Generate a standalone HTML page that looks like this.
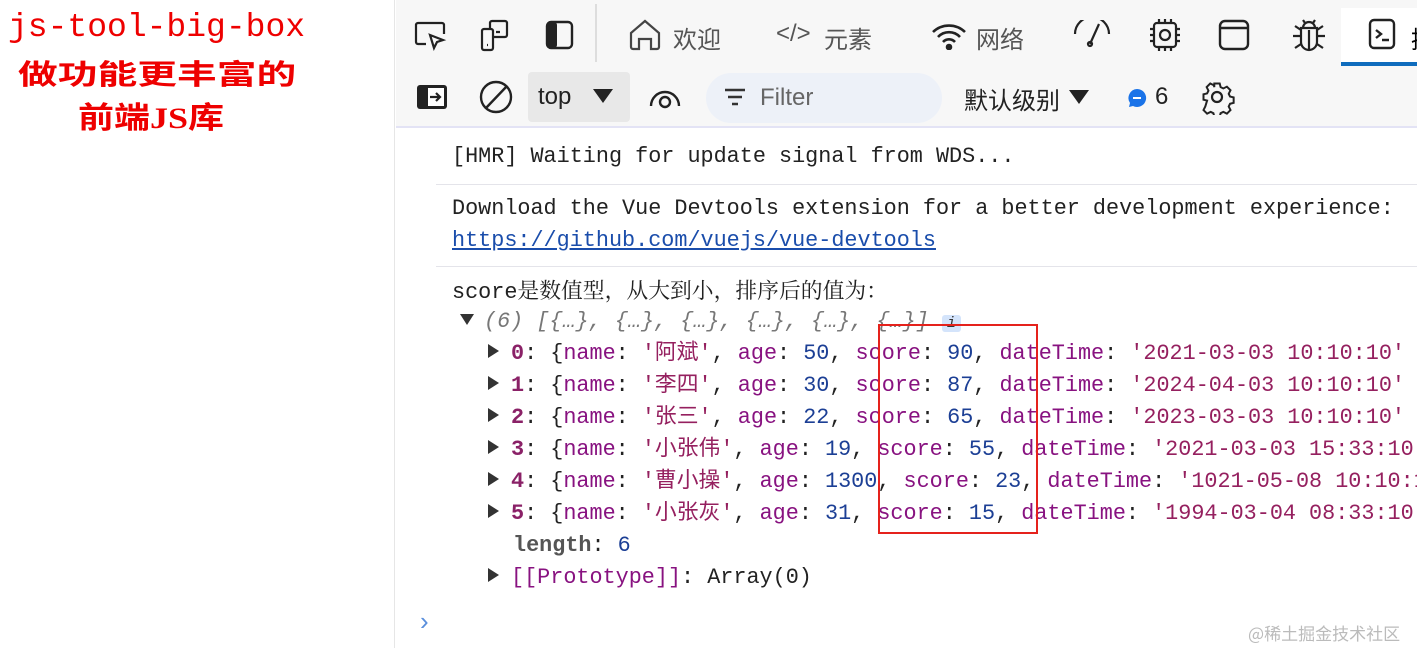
<!DOCTYPE html>
<html><head><meta charset="utf-8"><style>
*{margin:0;padding:0;box-sizing:border-box}
body{width:1417px;height:648px;overflow:hidden;background:#fff;position:relative;font-family:"Liberation Sans","Noto Sans CJK SC",sans-serif}
.left{position:absolute;left:0;top:0;width:395px;height:648px;background:#fff;border-right:1px solid #e6e6e6}
.t1{position:absolute;left:8px;top:8px;font-family:"Liberation Mono",monospace;color:#e00;font-size:33px;line-height:40px}
.t2{position:absolute;left:18px;top:56px;color:#e00;font-size:28px;line-height:34px;font-weight:bold;font-family:"Noto Sans CJK SC",sans-serif;transform:scaleX(1.42);transform-origin:0 0;white-space:nowrap}
.t3{position:absolute;left:78px;top:101px;color:#e00;font-size:30px;line-height:36px;font-weight:bold;font-family:"Liberation Serif","Noto Sans CJK SC",serif;transform:scaleX(1.2);transform-origin:0 0;white-space:nowrap}
.bar1{position:absolute;left:396px;top:0;width:1021px;height:66px;background:#f7f7f7}
.bar2{position:absolute;left:396px;top:66px;width:1021px;height:62px;background:#f7f7f7;border-bottom:2px solid #e3e3f5}
.ic{position:absolute}
.tab{position:absolute;top:20px;font-size:24px;color:#555;font-family:"Noto Sans CJK SC",sans-serif}
.sel{position:absolute;left:1341px;top:8px;width:76px;height:58px;background:#fff;border-bottom:4px solid #0f6cbd}
.con{position:absolute;left:396px;top:130px;width:1021px;height:518px;font-family:"Liberation Mono","Noto Sans CJK SC",monospace;font-size:21.8px;color:#222}
.l{position:absolute;left:56px;white-space:pre;height:32px;line-height:32px}
.sep{position:absolute;left:40px;right:0;height:1px;background:#e4e4ea}
.p{color:#881280}.k{color:#8a2167;font-weight:bold}.n{color:#1c3f95}.s{color:#95205f}.g{color:#777;font-style:italic}
.tri{display:inline-block;width:0;height:0;border-top:7px solid transparent;border-bottom:7px solid transparent;border-left:11px solid #333;margin-right:12px;vertical-align:middle;position:relative;top:-2px}
</style></head><body>
<div class="left">
<div class="t1">js-tool-big-box</div>
<div class="t2">做功能更丰富的</div>
<div class="t3">前端JS库</div>
</div>
<div class="bar1">
<svg class="ic" style="left:18px;top:20px" width="34" height="32" viewBox="0 0 34 32" fill="none" stroke="#222" stroke-width="2.2"><path d="M12 24H4a2 2 0 0 1-2-2V5a2 2 0 0 1 2-2h24a2 2 0 0 1 2 2v9"/><path d="M16 15l13 5-6 2-3 6z"/></svg>
<svg class="ic" style="left:84px;top:18px" width="30" height="34" viewBox="0 0 30 34" fill="none" stroke="#222" stroke-width="2.2"><rect x="10" y="3" width="17" height="16" rx="2"/><rect x="2" y="11" width="11" height="21" rx="2" fill="#f7f7f7"/><path d="M7 27h1M16 14h4"/></svg>
<svg class="ic" style="left:149px;top:20px" width="30" height="30" viewBox="0 0 30 30"><rect x="2" y="2" width="25" height="26" rx="4" fill="none" stroke="#222" stroke-width="2.4"/><rect x="2" y="2" width="10" height="26" rx="3" fill="#222"/></svg>
<div style="position:absolute;left:199px;top:4px;width:2px;height:58px;background:#ddd"></div>
<svg class="ic" style="left:232px;top:18px" width="34" height="34" viewBox="0 0 34 34" fill="none" stroke="#444" stroke-width="2.2"><path d="M3 15L17 3l14 12v14a2 2 0 0 1-2 2h-6V21h-12v10H5a2 2 0 0 1-2-2z"/></svg>
<div class="tab" style="left:277px">欢迎</div>
<div class="tab" style="left:380px;font-family:'Liberation Sans',sans-serif;top:20px">&lt;/&gt;</div>
<div class="tab" style="left:428px">元素</div>
<svg class="ic" style="left:535px;top:22px" width="36" height="28" viewBox="0 0 36 28" fill="none" stroke="#222" stroke-width="2.6"><path d="M2 10a23 23 0 0 1 32 0M7 15a15 15 0 0 1 22 0M12 20a8 8 0 0 1 12 0"/><circle cx="18" cy="25" r="2" fill="#222"/></svg>
<div class="tab" style="left:580px">网络</div>
<svg class="ic" style="left:676px;top:20px" width="40" height="30" viewBox="0 0 40 30" fill="none" stroke="#222" stroke-width="2.2"><path d="M3 14a17 17 0 0 1 34 0M18 24l9-20"/><circle cx="18" cy="24" r="2"/></svg>
<svg class="ic" style="left:752px;top:17px" width="34" height="36" viewBox="0 0 34 36" fill="none" stroke="#222" stroke-width="2.2"><rect x="6" y="6" width="22" height="24" rx="3"/><circle cx="17" cy="18" r="5"/><path d="M11 2v4M17 2v4M23 2v4M11 30v4M17 30v4M23 30v4M2 12h4M2 18h4M2 24h4M28 12h4M28 18h4M28 24h4"/></svg>
<svg class="ic" style="left:821px;top:18px" width="34" height="34" viewBox="0 0 34 34" fill="none" stroke="#222" stroke-width="2.4"><rect x="3" y="3" width="28" height="28" rx="5"/><path d="M3 10h28"/></svg>
<svg class="ic" style="left:895px;top:16px" width="36" height="38" viewBox="0 0 36 38" fill="none" stroke="#222" stroke-width="2.2"><path d="M10 12h16v14a8 8 0 0 1-16 0zM12 12a6 6 0 0 1 12 0M18 14v20M2 20h8M26 20h8M4 10l6 4M32 10l-6 4M4 32l6-4M32 32l-6-4M12 4l2 3M24 4l-2 3"/></svg>
</div>
<div class="sel"><svg class="ic" style="left:27px;top:10px" width="30" height="32" viewBox="0 0 30 32" fill="none" stroke="#222" stroke-width="2.4"><rect x="2" y="2" width="24" height="28" rx="4"/><path d="M8 12l5 4-5 4M14 22h7"/></svg><div style="position:absolute;left:70px;top:12px;font-size:24px;font-family:'Noto Sans CJK SC'">控</div></div>
<div class="bar2">
<svg class="ic" style="left:20px;top:18px" width="32" height="26" viewBox="0 0 32 26"><rect x="1" y="1" width="30" height="24" rx="3" fill="#222"/><rect x="12" y="4" width="16" height="18" fill="#fff"/><path d="M14 13h10M20 9l4 4-4 4" stroke="#222" stroke-width="2.2" fill="none"/></svg>
<svg class="ic" style="left:83px;top:14px" width="34" height="34" viewBox="0 0 34 34" fill="none" stroke="#222" stroke-width="2.4"><circle cx="17" cy="17" r="15"/><path d="M7 28L28 6"/></svg>
<div style="position:absolute;left:132px;top:6px;width:102px;height:50px;background:#e8e8e8;border-radius:4px"></div>
<div style="position:absolute;left:142px;top:17px;font-size:24px;color:#222">top</div>
<div style="position:absolute;left:197px;top:23px;width:0;height:0;border-left:10px solid transparent;border-right:10px solid transparent;border-top:14px solid #222"></div>
<svg class="ic" style="left:252px;top:18px" width="34" height="26" viewBox="0 0 34 26" fill="none" stroke="#222" stroke-width="2.4"><path d="M3 22a14 14 0 0 1 28 0"/><circle cx="17" cy="18" r="5"/></svg>
<div style="position:absolute;left:310px;top:7px;width:236px;height:50px;background:#edf1f8;border-radius:25px"></div>
<svg class="ic" style="left:328px;top:22px" width="22" height="18" viewBox="0 0 22 18" stroke="#333" stroke-width="2.4"><path d="M1 2h20M4 9h14M8 16h6"/></svg>
<div style="position:absolute;left:364px;top:18px;font-size:24px;color:#666">Filter</div>
<div style="position:absolute;left:568px;top:15px;font-size:24px;color:#222;font-family:'Noto Sans CJK SC'">默认级别</div>
<div style="position:absolute;left:673px;top:24px;width:0;height:0;border-left:10px solid transparent;border-right:10px solid transparent;border-top:14px solid #222"></div>
<svg class="ic" style="left:731px;top:22px" width="20" height="20" viewBox="0 0 20 20"><path d="M10 1a9 9 0 1 1-4 17l-4 1 1-4A9 9 0 0 1 10 1z" fill="#1a73e8"/><path d="M6 10h8" stroke="#fff" stroke-width="2"/></svg>
<div style="position:absolute;left:759px;top:17px;font-size:24px;color:#222">6</div>
<svg class="ic" style="left:803px;top:13px" width="36" height="36" viewBox="0 0 36 36" fill="none" stroke="#222" stroke-width="2.2"><path d="M15 3h6l1 4 3 1.5 4-2 4 4-2 4 1.5 3 4 1v6l-4 1-1.5 3 2 4-4 4-4-2-3 1.5-1 4h-6l-1-4-3-1.5-4 2-4-4 2-4L7 22l-4-1v-6l4-1 1.5-3-2-4 4-4 4 2L15 7z" transform="scale(.9) translate(2,2)"/><circle cx="18" cy="18" r="5"/></svg>
</div>
<div class="con">
<div class="l" style="top:11px">[HMR] Waiting for update signal from WDS...</div>
<div class="sep" style="top:54px"></div>
<div class="l" style="top:63px">Download the Vue Devtools extension for a better development experience:</div>
<div class="l" style="top:95px;color:#1a4dab;text-decoration:underline">https://github.com/vuejs/vue-devtools</div>
<div class="sep" style="top:136px"></div>
<div class="l" style="top:144px">score<span style="font-family:'Noto Serif CJK SC',serif">是数值型，从大到小，排序后的值为：</span></div>
<div class="l" style="top:176px;left:64px"><span class="tri" style="border-left:7px solid transparent;border-right:7px solid transparent;border-top:11px solid #333;border-bottom:0;margin-right:10px"></span><span class="g">(6) [{…}, {…}, {…}, {…}, {…}, {…}]</span> <span style="background:#d4e4fb;color:#333;font-size:15px;padding:0 5px;border-radius:3px;font-style:italic">i</span></div>
<div class="l" style="top:208px;left:92px"><span class="tri"></span><span class="k">0</span>: {<span class="p">name</span>: <span class="s">'阿斌'</span>, <span class="p">age</span>: <span class="n">50</span>, <span class="p">score</span>: <span class="n">90</span>, <span class="p">dateTime</span>: <span class="s">'2021-03-03 10:10:10'</span></div>
<div class="l" style="top:240px;left:92px"><span class="tri"></span><span class="k">1</span>: {<span class="p">name</span>: <span class="s">'李四'</span>, <span class="p">age</span>: <span class="n">30</span>, <span class="p">score</span>: <span class="n">87</span>, <span class="p">dateTime</span>: <span class="s">'2024-04-03 10:10:10'</span></div>
<div class="l" style="top:272px;left:92px"><span class="tri"></span><span class="k">2</span>: {<span class="p">name</span>: <span class="s">'张三'</span>, <span class="p">age</span>: <span class="n">22</span>, <span class="p">score</span>: <span class="n">65</span>, <span class="p">dateTime</span>: <span class="s">'2023-03-03 10:10:10'</span></div>
<div class="l" style="top:304px;left:92px"><span class="tri"></span><span class="k">3</span>: {<span class="p">name</span>: <span class="s">'小张伟'</span>, <span class="p">age</span>: <span class="n">19</span>, <span class="p">score</span>: <span class="n">55</span>, <span class="p">dateTime</span>: <span class="s">'2021-03-03 15:33:10'</span></div>
<div class="l" style="top:336px;left:92px"><span class="tri"></span><span class="k">4</span>: {<span class="p">name</span>: <span class="s">'曹小操'</span>, <span class="p">age</span>: <span class="n">1300</span>, <span class="p">score</span>: <span class="n">23</span>, <span class="p">dateTime</span>: <span class="s">'1021-05-08 10:10:10'</span></div>
<div class="l" style="top:368px;left:92px"><span class="tri"></span><span class="k">5</span>: {<span class="p">name</span>: <span class="s">'小张灰'</span>, <span class="p">age</span>: <span class="n">31</span>, <span class="p">score</span>: <span class="n">15</span>, <span class="p">dateTime</span>: <span class="s">'1994-03-04 08:33:10'</span></div>
<div class="l" style="top:400px;left:117px"><span style="color:#555;font-weight:bold">length</span>: <span class="n">6</span></div>
<div class="l" style="top:432px;left:92px"><span class="tri"></span><span class="p">[[Prototype]]</span>: Array(0)</div>
<div style="position:absolute;left:482px;top:194px;width:160px;height:210px;border:2px solid #e5221c"></div>
<div style="position:absolute;left:24px;top:476px;color:#5a8fdc;font-size:26px;font-family:'Liberation Sans'">›</div>
<div style="position:absolute;left:852px;top:490px;font-size:17px;color:#bbb;font-family:'Noto Sans CJK SC',sans-serif">@稀土掘金技术社区</div>
</div>
</body></html>
